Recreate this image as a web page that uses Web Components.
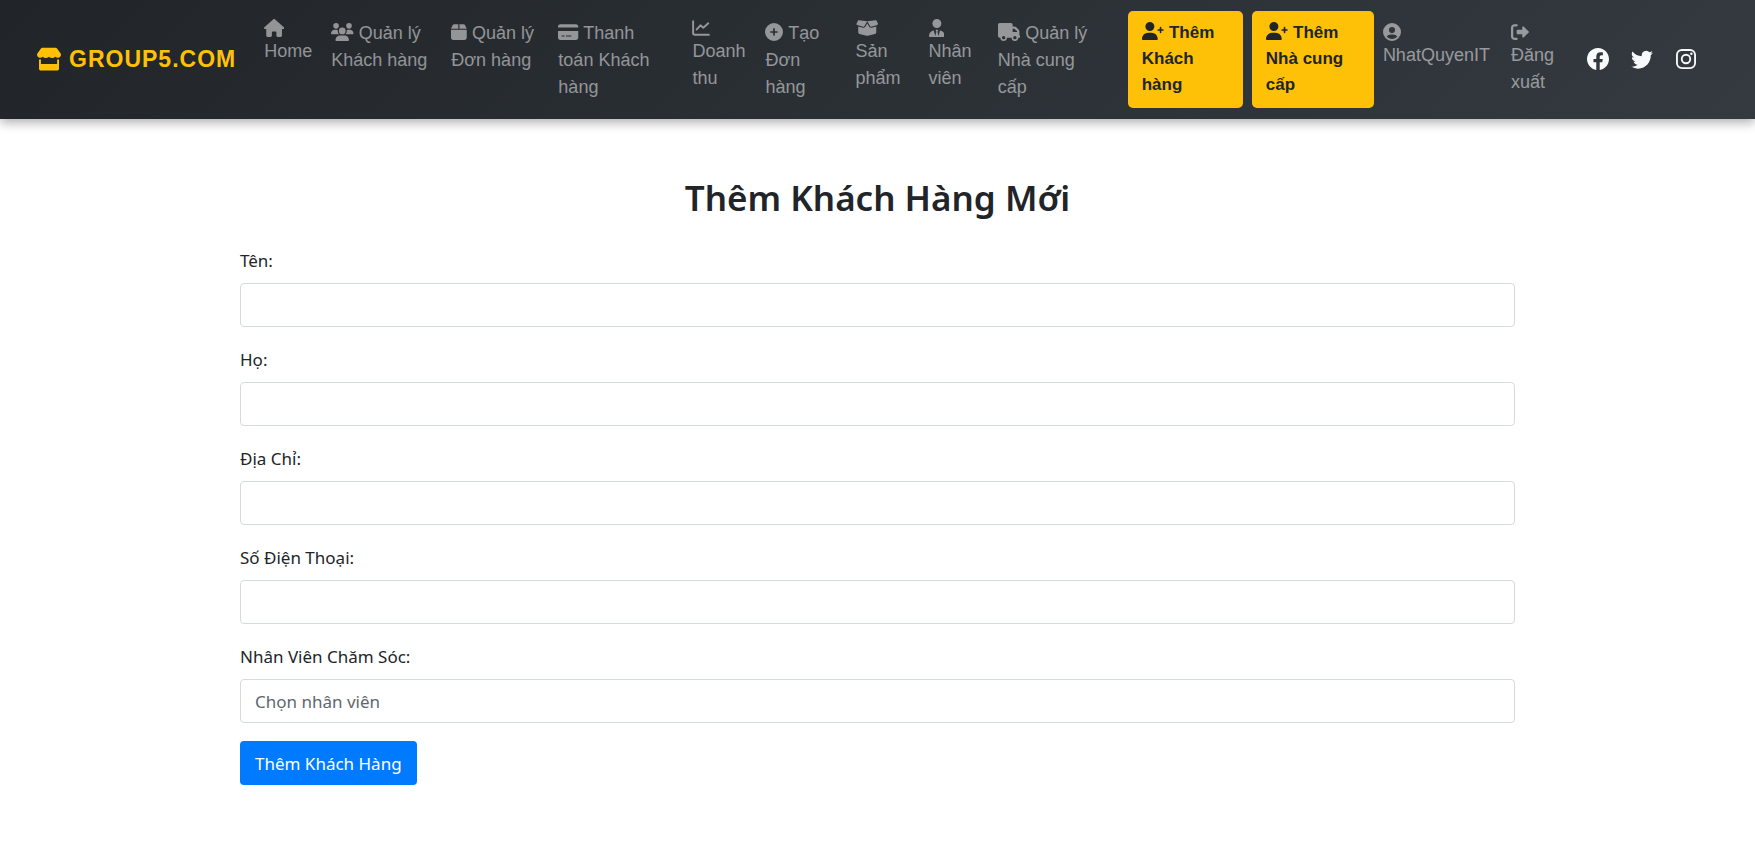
<!DOCTYPE html>
<html lang="vi">
<head>
<meta charset="utf-8">
<title>Thêm Khách Hàng Mới</title>
<style>
body { margin: 0; background: #fff; color: #212529; font: 17px/27px "Noto Sans", sans-serif; }
</style>
</head>
<body>
<site-header></site-header>
<customer-form></customer-form>

<script>
const ICONS = {
  store: ['0 0 24 24', '<path d="M3.800 1.800C4.200 1.200 4.800 .8 5.600.8h12.800c.8 0 1.400.4 1.800 1l3.300 4.400c1.200 2-.1 4.300-2.300 4.600q-1.800.2-2.900-1-1.200 1.300-3.100 1.300T12 9.800q-1.300 1.300-3.200 1.300T5.700 9.800q-1.100 1.200-2.900 1C.6 10.500-.7 8.200.5 6.200zM2 12.400h1.900V17h16.200v-4.600H22v9c0 1.300-.9 2.200-2.200 2.200H4.200C2.900 23.600 2 22.700 2 21.400z"/>'],
  house: ['0 0 576 512', '<path d="M575.8 255.5c0 18-15 32.100-32 32.100l-32 0 .7 160.200c0 2.700-.2 5.400-.5 8.100l0 16.200c0 22.100-17.900 40-40 40l-80 0c-22.100 0-40-17.900-40-40l0-88c0-17.700-14.300-32-32-32l-64 0c-17.700 0-32 14.300-32 32l0 88c0 22.100-17.900 40-40 40l-80 0c-22.100 0-40-17.900-40-40l0-184.500-32 0c-18 0-32-14-32-32.100 0-9 3-17 10-24L266.400 8c7-7 15-8 22-8s15 2 21 7L564.800 231.500c8 7 12 15 11 24z"/>'],
  users: ['0 0 640 512', '<path d="M144 0a80 80 0 1 1 0 160A80 80 0 1 1 144 0zM512 0a80 80 0 1 1 0 160A80 80 0 1 1 512 0zM0 298.700C0 239.800 47.800 192 106.700 192l42.700 0c15.900 0 31 3.500 44.600 9.700-1.300 7.200-1.900 14.700-1.900 22.300 0 38.200 16.800 72.500 43.300 96L21.300 320C9.600 320 0 310.400 0 298.700zM405.300 320c26.600-23.500 43.300-57.800 43.300-96 0-7.600-.7-15-1.900-22.300 13.600-6.300 28.700-9.700 44.600-9.700l42.700 0C592.200 192 640 239.800 640 298.700c0 11.800-9.600 21.300-21.300 21.300zM224 224a96 96 0 1 1 192 0 96 96 0 1 1-192 0zM128 485.300C128 411.700 187.700 352 261.300 352l117.400 0C452.300 352 512 411.700 512 485.300c0 14.700-11.900 26.700-26.700 26.700l-330.600 0c-14.700 0-26.700-11.900-26.700-26.700z"/>'],
  box: ['0 0 448 512', '<path d="M50.700 58.500 0 160l208 0 0-128L93.700 32C75.500 32 58.900 42.300 50.700 58.500zM240 160l208 0L397.300 58.500C389.100 42.300 372.500 32 354.300 32L240 32zM448 192 0 192 0 416c0 35.300 28.700 64 64 64l320 0c35.300 0 64-28.700 64-64z"/>'],
  card: ['0 0 576 512', '<path fill-rule="evenodd" d="M64 32C28.700 32 0 60.700 0 96l0 32 576 0 0-32c0-35.300-28.700-64-64-64zM576 224 0 224 0 416c0 35.300 28.700 64 64 64l448 0c35.300 0 64-28.700 64-64zM112 352l64 0c8.800 0 16 7.200 16 16s-7.200 16-16 16l-64 0c-8.800 0-16-7.200-16-16s7.200-16 16-16zm112 16c0-8.800 7.200-16 16-16l128 0c8.800 0 16 7.200 16 16s-7.200 16-16 16l-128 0c-8.800 0-16-7.200-16-16z"/>'],
  chart: ['0 0 512 512', '<path fill="none" stroke="currentColor" stroke-width="56" stroke-linecap="round" stroke-linejoin="round" d="M32 62V400q0 50 48 50H480M134 296 240 180l80 66L464 124"/>'],
  plus: ['0 0 512 512', '<path fill-rule="evenodd" d="M256 512A256 256 0 1 0 256 0a256 256 0 1 0 0 512zM232 344l0-64-64 0c-13.300 0-24-10.700-24-24s10.700-24 24-24l64 0 0-64c0-13.300 10.700-24 24-24s24 10.700 24 24l0 64 64 0c13.300 0 24 10.700 24 24s-10.700 24-24 24l-64 0 0 64c0 13.300-10.700 24-24 24s-24-10.700-24-24z"/>'],
  open: ['0 0 640 512', '<path d="M58.900 42.100c3-6.100 9.600-9.600 16.300-8.700L320 64 564.800 33.400c6.700-.8 13.300 2.700 16.300 8.700l41.700 83.400c9 17.900-.6 39.600-19.800 45.100L439.600 217.300c-13.900 4-28.800-1.900-36.200-14.300L320 64 236.600 203c-7.400 12.400-22.300 18.300-36.200 14.300L37.100 170.600c-19.300-5.500-28.800-27.200-19.800-45.100zM321.100 128l54.900 91.400c14.900 24.800 44.600 36.600 72.500 28.600L576 211.600l0 167c0 22-15 41.200-36.400 46.600l-204.100 51c-10.200 2.600-20.900 2.600-31 0l-204.100-51C79 419.700 64 400.500 64 378.500l0-167L191.600 248c27.800 8 57.600-3.800 72.500-28.600L318.900 128z"/>'],
  tie: ['0 0 448 512', '<path d="M96 128a128 128 0 1 0 256 0A128 128 0 1 0 96 128zm94.500 200.200 18.600 31L175.800 483.100l-36-146.900c-2-8.100-9.800-13.400-17.900-11.300C51.900 342.400 0 405.800 0 481.300c0 17 13.800 30.700 30.700 30.700l386.600 0c17 0 30.700-13.800 30.700-30.700 0-75.500-51.900-138.900-121.900-156.400-8.100-2-15.900 3.300-17.900 11.300l-36 146.900L238.900 359.200l18.600-31c6.400-10.700-1.300-24.200-13.700-24.200l-39.500 0c-12.400 0-20.100 13.500-13.800 24.200z"/>'],
  truck: ['0 0 640 512', '<path fill-rule="evenodd" d="M48 0C21.500 0 0 21.500 0 48L0 368c0 26.500 21.500 48 48 48l16 0c0 53 43 96 96 96s96-43 96-96l128 0c0 53 43 96 96 96s96-43 96-96l32 0c17.700 0 32-14.300 32-32s-14.300-32-32-32l0-114.700c0-17-6.700-33.300-18.700-45.300L512 114.700c-12-12-28.300-18.700-45.300-18.700L416 96l0-48c0-26.500-21.500-48-48-48zM416 160l50.700 0L544 237.300l0 18.700-128 0zM112 416a48 48 0 1 1 96 0 48 48 0 1 1-96 0zm368-48a48 48 0 1 1 0 96 48 48 0 1 1 0-96z"/>'],
  add: ['0 0 640 512', '<path d="M96 128a128 128 0 1 1 256 0A128 128 0 1 1 96 128zM0 482.300C0 383.800 79.800 304 178.300 304l91.400 0C368.200 304 448 383.800 448 482.300c0 16.400-13.300 29.700-29.700 29.700L29.700 512C13.300 512 0 498.700 0 482.300z"/><path fill="none" stroke="currentColor" stroke-width="48" stroke-linecap="round" d="M528 162v132M462 228h132"/>'],
  account: ['0 0 512 512', '<path fill-rule="evenodd" d="M256 0a256 256 0 1 0 0 512 256 256 0 1 0 0-512zM256 116a86 86 0 1 1 0 172 86 86 0 1 1 0-172zM106 384c28-40 66-60 110-60h80c44 0 82 20 110 60-36 44-90 70-150 70s-114-26-150-70z"/>'],
  exit: ['0 0 512 512', '<path d="M160 96c17.700 0 32-14.300 32-32s-14.300-32-32-32L96 32C43 32 0 75 0 128L0 384c0 53 43 96 96 96l64 0c17.700 0 32-14.300 32-32s-14.300-32-32-32l-64 0c-17.700 0-32-14.300-32-32l0-256c0-17.700 14.300-32 32-32zM504.500 273.400c4.800-4.500 7.500-10.800 7.500-17.400s-2.700-12.900-7.500-17.400l-144-136c-7-6.600-17.200-8.400-26-4.600s-14.500 12.400-14.500 22l0 72-128 0c-17.700 0-32 14.300-32 32l0 64c0 17.700 14.300 32 32 32l128 0 0 72c0 9.600 5.700 18.200 14.500 22s19 2 26-4.600z"/>'],
  facebook: ['0 0 16 16', '<path d="M16 8.049c0-4.446-3.582-8.050-8-8.050C3.580 0-.002 3.603-.002 8.050c0 4.017 2.926 7.347 6.750 7.951v-5.625h-2.030V8.050H6.750V6.275c0-2.017 1.195-3.131 3.022-3.131.876 0 1.791.157 1.791.157v1.980h-1.009c-.993 0-1.303.621-1.303 1.258v1.510h2.218l-.354 2.326H9.250V16c3.824-.604 6.750-3.934 6.750-7.951z"/>'],
  twitter: ['0 0 16 16', '<path d="M5.026 15c6.038 0 9.341-5.003 9.341-9.334 0-.14 0-.282-.006-.422A6.685 6.685 0 0 0 16 3.542a6.658 6.658 0 0 1-1.889.518 3.301 3.301 0 0 0 1.447-1.817 6.533 6.533 0 0 1-2.087.793A3.286 3.286 0 0 0 7.875 6.030a9.325 9.325 0 0 1-6.767-3.429 3.289 3.289 0 0 0 1.018 4.382A3.323 3.323 0 0 1 .640 6.575v.045a3.288 3.288 0 0 0 2.632 3.218 3.203 3.203 0 0 1-.865.115 3.230 3.230 0 0 1-.614-.057 3.283 3.283 0 0 0 3.067 2.277A6.588 6.588 0 0 1 .780 13.580a6.320 6.320 0 0 1-.780-.045A9.344 9.344 0 0 0 5.026 15z"/>'],
  instagram: ['0 0 16 16', '<g fill="none" stroke="currentColor" stroke-width="1.5"><rect x=".75" y=".75" width="14.5" height="14.5" rx="4"/><circle cx="8" cy="8" r="3.400"/></g><circle cx="12.300" cy="3.700" r="1"/>']
};

class UiIcon extends HTMLElement {
  connectedCallback() {
    const [box, shape] = ICONS[this.getAttribute('name')];
    this.attachShadow({ mode: 'open' }).innerHTML = `
      <style>
        :host { display: inline-block; height: 18px; vertical-align: -2px; line-height: 0; }
        svg { height: 100%; display: block; fill: currentColor; }
      </style>
      <svg viewBox="${box}" aria-hidden="true">${shape}</svg>`;
  }
}
customElements.define('ui-icon', UiIcon);

class NavItem extends HTMLElement {
  connectedCallback() {
    this.attachShadow({ mode: 'open' }).innerHTML = `
      <style>
        :host { display: block; min-width: 0; }
        a { display: block; box-sizing: border-box; padding: 9px; color: rgba(255,255,255,.5); text-decoration: none; line-height: 27px; }
        :host([stacked]) a { padding-top: 8px; }
        :host([account]) a { padding-top: 12px; }
        :host([narrow]) a { padding-right: 18px; }
        :host([stacked]) ui-icon, :host([account]) ui-icon { display: block; margin-bottom: 1px; }
        :host([primary]) a { margin-left: 9px; padding: 9px 14px 10px; border-radius: 5px; background: #ffc107; color: #212529; font-weight: bold; font-size: 17px; line-height: 26px; }
      </style>
      <a href="#"><ui-icon name="${this.getAttribute('icon')}"></ui-icon> <slot></slot></a>`;
  }
}
customElements.define('nav-item', NavItem);

class SiteHeader extends HTMLElement {
  connectedCallback() {
    this.attachShadow({ mode: 'open' }).innerHTML = `
      <style>
        :host { display: block; font: 18px/27px "Liberation Sans", Arial, sans-serif; }
        header { display: flex; align-items: center; padding: 11px 47px 9px 37px; background: linear-gradient(135deg, #212529, #343a40); box-shadow: 0 4px 10px rgba(0,0,0,.3); }
        .brand, .social { padding-bottom: 3px; }
        .brand { display: flex; align-items: center; gap: 8px; margin-right: 19px; color: #ffc107; font-size: 23px; font-weight: bold; letter-spacing: 1px; text-decoration: none; }
        .brand ui-icon { height: 24px; }
        nav { flex: 1; display: grid; grid-template-columns: 67fr 120fr 107fr 134fr 73fr 90fr 73fr 69fr 130fr 124fr 131fr 128fr 62fr; align-items: start; }
        .social { display: flex; margin-left: 12px; }
        .social a { padding: 0 11px; color: #f8f9fa; }
        .social ui-icon { height: 22px; display: block; }
        .social ui-icon[name=instagram] { height: 20px; padding: 1px; }
      </style>
      <header>
        <a class="brand" href="#"><ui-icon name="store"></ui-icon>GROUP5.COM</a>
        <nav aria-label="Menu">
          <nav-item icon="house" stacked>Home</nav-item>
          <nav-item icon="users">Quản lý Khách hàng</nav-item>
          <nav-item icon="box">Quản lý Đơn hàng</nav-item>
          <nav-item icon="card" narrow>Thanh toán Khách hàng</nav-item>
          <nav-item icon="chart" stacked>Doanh thu</nav-item>
          <nav-item icon="plus">Tạo Đơn hàng</nav-item>
          <nav-item icon="open" stacked>Sản phẩm</nav-item>
          <nav-item icon="tie" stacked>Nhân viên</nav-item>
          <nav-item icon="truck" narrow>Quản lý Nhà cung cấp</nav-item>
          <nav-item icon="add" primary>Thêm Khách hàng</nav-item>
          <nav-item icon="add" primary>Thêm Nhà cung cấp</nav-item>
          <nav-item icon="account" account>NhatQuyenIT</nav-item>
          <nav-item icon="exit" account>Đăng xuất</nav-item>
        </nav>
        <div class="social">
          <a href="#" aria-label="Facebook"><ui-icon name="facebook"></ui-icon></a>
          <a href="#" aria-label="Twitter"><ui-icon name="twitter"></ui-icon></a>
          <a href="#" aria-label="Instagram"><ui-icon name="instagram"></ui-icon></a>
        </div>
      </header>`;
  }
}
customElements.define('site-header', SiteHeader);

class FormField extends HTMLElement {
  connectedCallback() {
    const control = this.getAttribute('type') === 'select'
      ? `<select id="control"><option>${this.getAttribute('placeholder')}</option></select>`
      : `<input id="control" type="${this.getAttribute('type') || 'text'}">`;
    this.attachShadow({ mode: 'open' }).innerHTML = `
      <style>
        :host { display: block; margin-bottom: 19px; }
        label { display: block; margin-bottom: 9px; }
        input, select { display: block; box-sizing: border-box; width: 100%; height: 44px; margin: 0; padding: 0 14px; border: 1px solid #d5dadd; border-radius: 4px; background: #fff; color: #5f676e; font: inherit; appearance: none; }
      </style>
      <label for="control"><slot></slot></label>${control}`;
  }
}
customElements.define('form-field', FormField);

class CustomerForm extends HTMLElement {
  connectedCallback() {
    this.attachShadow({ mode: 'open' }).innerHTML = `
      <style>
        :host { display: block; max-width: 1275px; margin: 0 auto; padding: 56px 16px; }
        h1 { margin: 0 0 27px; font-size: 35px; line-height: 45px; font-weight: 600; text-align: center; }
        form-field:last-of-type { margin-bottom: 18px; }
        button { height: 44px; padding: 0 15px; border: 0; border-radius: 4px; background: #007bff; color: #fff; font: inherit; }
      </style>
      <h1>Thêm Khách Hàng Mới</h1>
      <form>
        <form-field>Tên:</form-field>
        <form-field>Họ:</form-field>
        <form-field>Địa Chỉ:</form-field>
        <form-field type="tel">Số Điện Thoại:</form-field>
        <form-field type="select" placeholder="Chọn nhân viên">Nhân Viên Chăm Sóc:</form-field>
        <button type="button">Thêm Khách Hàng</button>
      </form>`;
  }
}
customElements.define('customer-form', CustomerForm);
</script>
</body>
</html>
